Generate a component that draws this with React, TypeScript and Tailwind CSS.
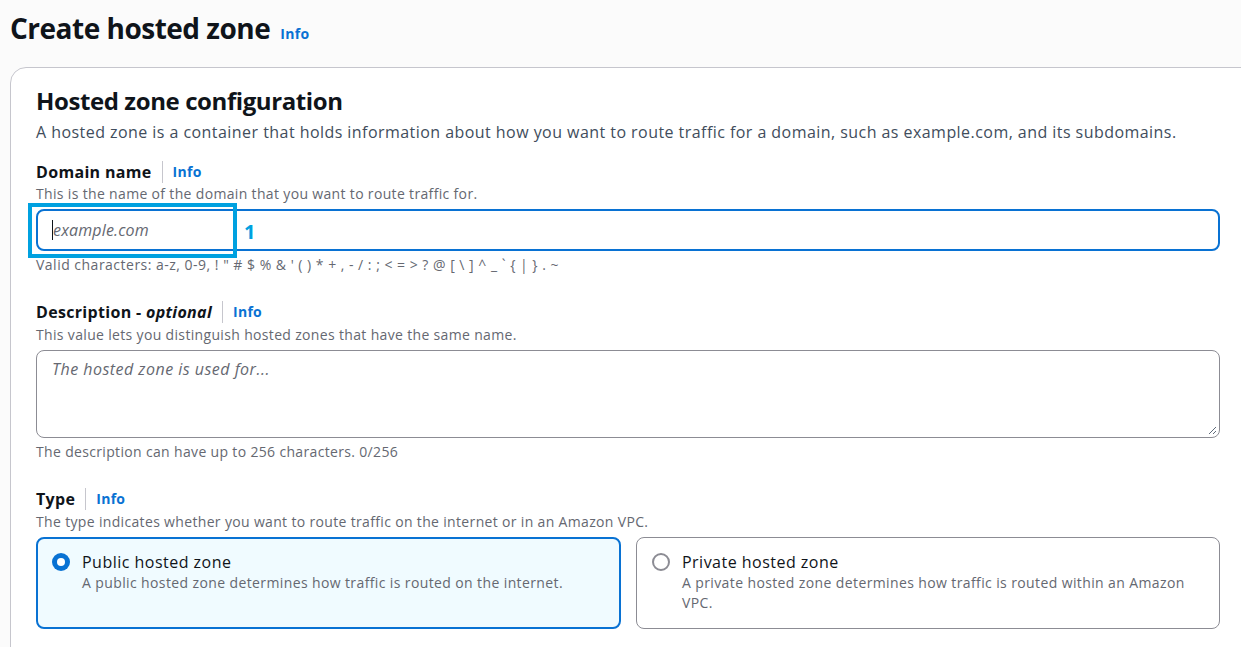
import React from "react";

const font = { fontFamily: '"Open Sans", "Noto Sans", Arial, sans-serif' };

function Info() {
  return <span className="text-[14px] font-bold text-[#0972d3] leading-none tracking-[0.02em]">Info</span>;
}

function Label({ children }: { children: React.ReactNode }) {
  return (
    <div className="flex items-center h-[22px]">
      <span className="text-[16px] font-bold text-[#0f141a] leading-[22px] tracking-[0.02em]">{children}</span>
      <span className="mx-[10px] w-px h-[22px] bg-[#c6c6cd]" />
      <Info />
    </div>
  );
}

export default function App() {
  return (
    <div style={font} className="w-[1241px] h-[647px] overflow-hidden bg-[#fbfbfb] text-[#0f141a] tracking-[0.03em]">
      <div className="pl-[10px] pt-[11px] flex items-baseline gap-[10px] h-[67px]">
        <h1 className="text-[28px] font-bold leading-[34px] tracking-[-0.5px] text-[#0f141a]">Create hosted zone</h1>
        <Info />
      </div>
      <div className="ml-[10px] w-[1250px] h-[600px] rounded-[16px] border border-[#c6c6cd] bg-white pl-[25px] pt-[18px]">
        <h2 className="text-[24px] font-bold leading-[30px] tracking-[-0.4px]">Hosted zone configuration</h2>
        <p className="text-[16px] text-[#414d5c] leading-[22px] mt-[5px] tracking-[0.028em]">
          A hosted zone is a container that holds information about how you want to route traffic for a domain, such as example.com, and its subdomains.
        </p>

        <div className="mt-[18px]">
          <Label>Domain name</Label>
          <p className="text-[14px] text-[#656871] leading-[18px] mt-[2px] tracking-[0.024em]">This is the name of the domain that you want to route traffic for.</p>
          <div className="relative mt-[6px] w-[1184px] h-[42px] rounded-[8px] border-2 border-[#0972d3] flex items-center pl-[14px]">
            <span className="w-px h-[20px] bg-[#0f141a]" />
            <span className="text-[16px] italic text-[#656871] tracking-[0.01em]">example.com</span>
            <div className="absolute left-[-10px] top-[-8px] w-[209px] h-[55px] border-[4px] border-[#00a1e0]" />
            <span className="absolute left-[206px] top-[6px] text-[20px] font-bold text-[#00a1e0]">1</span>
          </div>
          <p className="text-[14px] text-[#656871] leading-[18px] mt-[5px] tracking-[0.035em]">
            Valid characters: a-z, 0-9, ! " # $ % &amp; ' ( ) * + , - / : ; &lt; = &gt; ? @ [ \ ] ^ _ ` {"{"} | {"}"} . ~
          </p>
        </div>

        <div className="mt-[27px]">
          <Label>
            Description - <i>optional</i>
          </Label>
          <p className="text-[14px] text-[#656871] leading-[18px] mt-[3px] tracking-[0.024em]">This value lets you distinguish hosted zones that have the same name.</p>
          <div className="relative mt-[6px] w-[1184px] h-[88px] rounded-[8px] border border-[#8c8c94] pl-[15px] pt-[6px]">
            <span className="text-[16px] italic text-[#656871]">The hosted zone is used for...</span>
            <svg className="absolute right-[2px] bottom-[2px]" width="9" height="9" viewBox="0 0 9 9">
              <path d="M8 1 L1 8 M8 5 L5 8" stroke="#5f6b7a" strokeWidth="1" />
            </svg>
          </div>
          <p className="text-[14px] text-[#656871] leading-[18px] mt-[5px] tracking-[0.024em]">The description can have up to 256 characters. 0/256</p>
        </div>

        <div className="mt-[27px]">
          <Label>Type</Label>
          <p className="text-[14px] text-[#656871] leading-[18px] mt-[3px] tracking-[0.024em]">The type indicates whether you want to route traffic on the internet or in an Amazon VPC.</p>
          <div className="mt-[6px] flex gap-[15px] w-[1184px] tracking-[0.024em]">
            <div className="w-[585px] h-[92px] rounded-[8px] border-2 border-[#0972d3] bg-[#f0fbff] flex pl-[14px] pt-[12px] gap-[12px]">
              <span className="mt-[2px] w-[18px] h-[18px] rounded-full bg-[#0972d3] flex items-center justify-center shrink-0">
                <span className="w-[8px] h-[8px] rounded-full bg-white" />
              </span>
              <div>
                <div className="text-[16px] leading-[22px] text-[#0f141a] tracking-[0.03em]">Public hosted zone</div>
                <div className="text-[14px] leading-[20px] text-[#656871]">A public hosted zone determines how traffic is routed on the internet.</div>
              </div>
            </div>
            <div className="w-[584px] h-[92px] rounded-[8px] border border-[#8c8c94] bg-white flex pl-[15px] pt-[13px] gap-[12px]">
              <span className="mt-[2px] w-[18px] h-[18px] rounded-full border-2 border-[#8c8c94] shrink-0" />
              <div>
                <div className="text-[16px] leading-[22px] text-[#0f141a] tracking-[0.03em]">Private hosted zone</div>
                <div className="text-[14px] leading-[20px] text-[#656871] pr-[20px]">A private hosted zone determines how traffic is routed within an Amazon VPC.</div>
              </div>
            </div>
          </div>
        </div>
      </div>
    </div>
  );
}
